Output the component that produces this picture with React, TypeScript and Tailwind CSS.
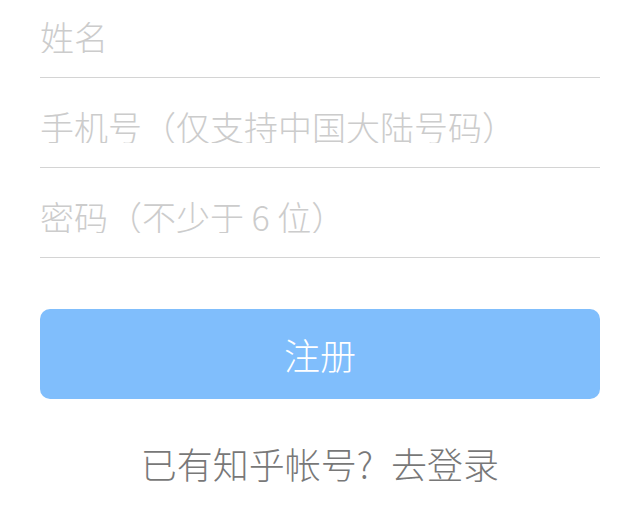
import { useState } from 'react';

const fields = [
  { name: 'name', placeholder: '姓名', type: 'text', height: 'h-[78px]' },
  { name: 'phone', placeholder: '手机号（仅支持中国大陆号码）', type: 'tel', height: 'h-[90px]' },
  { name: 'password', placeholder: '密码（不少于 6 位）', type: 'password', height: 'h-[90px]' },
];

export default function App() {
  const [values, setValues] = useState<Record<string, string>>({});

  return (
    <div className="min-h-screen bg-white px-10 font-['Noto_Sans_CJK_SC','Noto_Sans',sans-serif] font-light">
      <form className="flex flex-col" onSubmit={(e) => e.preventDefault()}>
        {fields.map((field) => (
          <div key={field.name} className={`flex items-end border-b border-[#d4d4d4] pb-[24px] ${field.height}`}>
            <input
              type={field.type}
              name={field.name}
              value={values[field.name] ?? ''}
              onChange={(e) => setValues({ ...values, [field.name]: e.target.value })}
              placeholder={field.placeholder}
              className="h-[34px] w-full bg-transparent text-[34px] leading-[34px] font-light text-[#333] outline-none placeholder:text-[#cccccc]"
            />
          </div>
        ))}

        <button
          type="submit"
          className="mt-[51px] h-[90px] w-full rounded-[10px] bg-[#80befc] text-[36px] font-light text-white"
        >
          注册
        </button>
      </form>

      <p className="mt-[46px] text-center text-[36px] leading-[36px] text-[#787878]">
        已有知乎帐号?{'\u2002'}去登录
      </p>
    </div>
  );
}
